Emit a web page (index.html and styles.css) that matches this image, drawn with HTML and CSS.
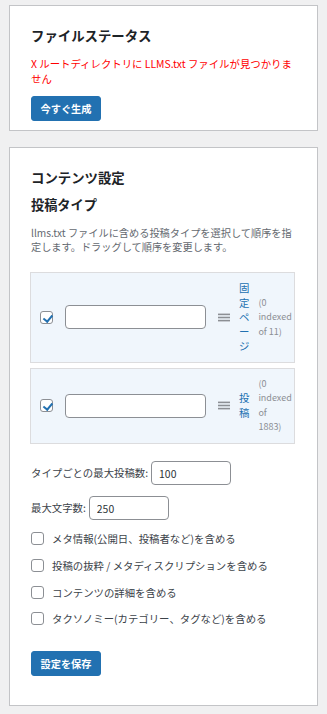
FILE: index.html
```html
<!DOCTYPE html>
<html lang="ja">
<head>
<meta charset="utf-8">
<title>LLMS</title>
<link rel="stylesheet" href="styles.css">
</head>
<body>
<div class="card card-status">
  <h2 class="title">ファイルステータス</h2>
  <p class="error">X ルートディレクトリに LLMS.txt ファイルが見つかりません</p>
  <button class="btn btn-gen" type="button">今すぐ生成</button>
</div>

<div class="card card-settings">
  <h2 class="title">コンテンツ設定</h2>
  <h3 class="subtitle">投稿タイプ</h3>
  <p class="desc">llms.txt ファイルに含める投稿タイプを選択して順序を指定します。ドラッグして順序を変更します。</p>

  <div class="types">
    <div class="type-item">
      <input class="cb" type="checkbox" checked>
      <input class="type-input" type="text">
      <svg class="handle" width="12" height="9" viewBox="0 0 12 9"><rect x="0" y="0.6" width="12" height="1.6" fill="#8c8f94"/><rect x="0" y="3.7" width="12" height="1.6" fill="#8c8f94"/><rect x="0" y="6.8" width="12" height="1.6" fill="#8c8f94"/></svg>
      <span class="type-label">固定ページ</span>
      <span class="type-count">(0 indexed of 11)</span>
    </div>
    <div class="type-item">
      <input class="cb" type="checkbox" checked>
      <input class="type-input" type="text">
      <svg class="handle" width="12" height="9" viewBox="0 0 12 9"><rect x="0" y="0.6" width="12" height="1.6" fill="#8c8f94"/><rect x="0" y="3.7" width="12" height="1.6" fill="#8c8f94"/><rect x="0" y="6.8" width="12" height="1.6" fill="#8c8f94"/></svg>
      <span class="type-label">投稿</span>
      <span class="type-count">(0 indexed of 1883)</span>
    </div>
  </div>

  <div class="field field-first">
    <label class="field-label">タイプごとの最大投稿数:</label>
    <input class="num" type="text" value="100">
  </div>
  <div class="field">
    <label class="field-label">最大文字数:</label>
    <input class="num" type="text" value="250">
  </div>

  <div class="options">
    <label class="option"><input class="cb" type="checkbox"><span>メタ情報(公開日、投稿者など)を含める</span></label>
    <label class="option"><input class="cb" type="checkbox"><span>投稿の抜粋 / メタディスクリプションを含める</span></label>
    <label class="option"><input class="cb" type="checkbox"><span>コンテンツの詳細を含める</span></label>
    <label class="option"><input class="cb" type="checkbox"><span>タクソノミー(カテゴリー、タグなど)を含める</span></label>
  </div>

  <button class="btn btn-save" type="button">設定を保存</button>
</div>
</body>
</html>
```
FILE: styles.css
```css
* { box-sizing: border-box; }

html, body { margin: 0; }

body {
  background: #f0f0f1;
  padding: 5px 9px 10px;
  font-family: "Noto Sans CJK JP", "Noto Sans", sans-serif;
  font-size: 10.4px;
  color: #3c434a;
}

.card {
  background: #fff;
  border: 1px solid #c3c4c7;
  padding: 20px 21px 9px;
}

.card-settings {
  margin-top: 16px;
  padding-bottom: 29px;
}

.title {
  margin: 0;
  font-size: 13.4px;
  line-height: 18px;
  font-weight: 700;
  color: #1d2327;
}

.subtitle {
  margin: 10px 0 0;
  font-size: 13.2px;
  line-height: 18px;
  font-weight: 700;
  color: #1d2327;
}

.error {
  margin: 12px 0 0;
  line-height: 15px;
  color: #ff0000;
}

.desc {
  margin: 12px 0 0;
  font-size: 10.2px;
  line-height: 14px;
  color: #646970;
}

.btn {
  display: block;
  width: 70px;
  height: 25px;
  padding: 0;
  border: 1px solid #2271b1;
  border-radius: 3px;
  background: #2271b1;
  color: #fff;
  font-family: inherit;
  font-size: 10.2px;
  font-weight: 700;
  line-height: 23px;
  text-align: center;
}

.btn-gen { margin-top: 10px; }
.btn-save { margin-top: 19px; height: 24.5px; }

.types {
  margin-top: 18px;
  display: flex;
  flex-direction: column;
  gap: 5px;
  margin-right: 1px;
  margin-left: -1px;
}

.type-item {
  display: flex;
  align-items: center;
  padding: 8px 9px;
  background: #f0f6fc;
  border: 1px solid #dcdcde;
}

.cb {
  appearance: none;
  -webkit-appearance: none;
  margin: 0;
  width: 13px;
  height: 13px;
  flex: none;
  border: 1px solid #8c8f94;
  border-radius: 3px;
  background: #fff;
  position: relative;
}

.cb:checked::before {
  content: "";
  position: absolute;
  left: 3.5px;
  top: 1px;
  width: 3.5px;
  height: 7px;
  border-right: 2px solid #2271b1;
  border-bottom: 2px solid #2271b1;
  transform: rotate(40deg);
}

.type-input {
  margin: 0 0 0 12px;
  width: 141px;
  height: 24px;
  flex: none;
  border: 1px solid #8c8f94;
  border-radius: 4px;
  background: #fff;
}

.handle {
  flex: none;
  margin-left: 12px;
}

.type-label {
  margin-left: 9px;
  width: min-content;
  line-break: anywhere;
  font-size: 10.4px;
  line-height: 14.5px;
  color: #2271b1;
}

.type-count {
  margin-left: 9px;
  width: min-content;
  font-size: 9px;
  line-height: 14.5px;
  color: #8c8f94;
}

.field {
  display: flex;
  align-items: center;
  gap: 3px;
  margin-top: 11px;
}

.field-first { margin-top: 17.5px; }

.field-label { line-height: 14px; }

.num {
  margin: 0;
  width: 80px;
  height: 24px;
  padding: 0 7px;
  border: 1px solid #8c8f94;
  border-radius: 4px;
  background: #fff;
  font-family: inherit;
  font-size: 10.4px;
  color: #2c3338;
}

.options {
  margin-top: 5.3px;
  display: flex;
  flex-direction: column;
}

.option {
  display: flex;
  align-items: center;
  gap: 8px;
  height: 26.7px;
}
```
